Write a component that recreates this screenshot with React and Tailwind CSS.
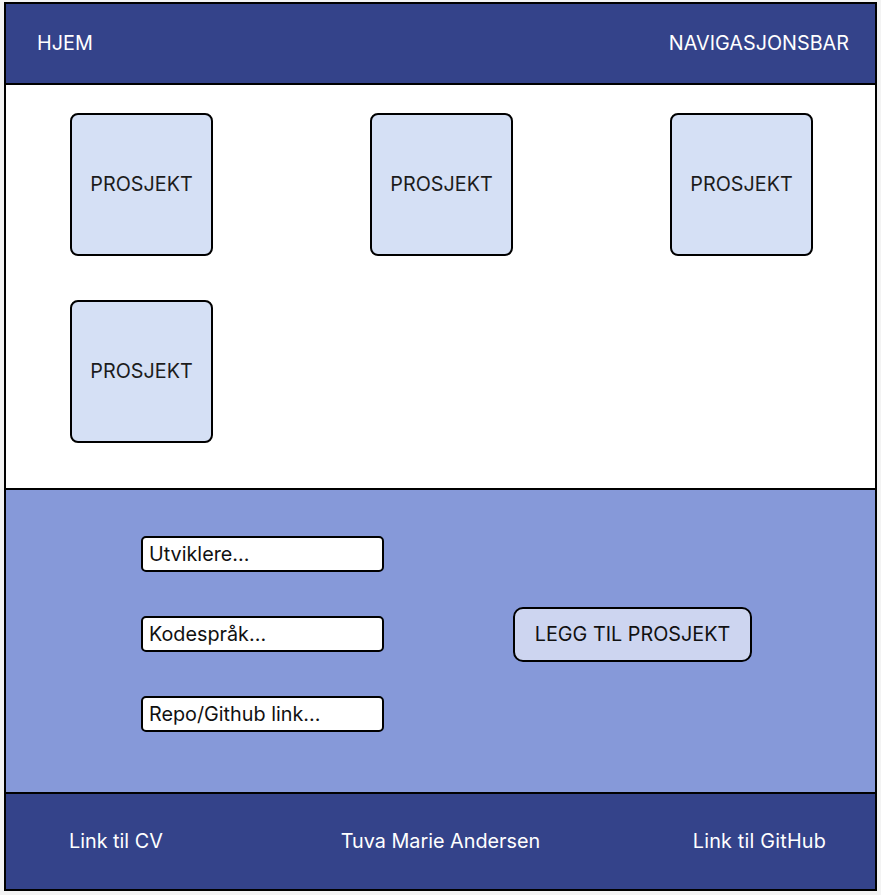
import React from 'react';

const font = { fontFamily: 'Inter, "Noto Sans", sans-serif' };

const ProjectCard = () => (
  <div className="w-[143px] h-[143px] rounded-lg border-2 border-black bg-[#d5e0f5] flex items-center justify-center text-[19.8px] text-[#1c1c1c]">
    PROSJEKT
  </div>
);

const Field = ({ placeholder }) => (
  <input
    type="text"
    placeholder={placeholder}
    className="w-[243px] h-[36px] rounded-[5px] border-2 border-black bg-white px-[6px] text-[19.8px] text-black placeholder:text-[#111] outline-none"
  />
);

export default function App() {
  return (
    <div className="min-h-[895px] bg-[#f3f3f3] pt-[2px] pl-[4px]" style={font}>
      <div className="w-[873px] border-2 border-black">
        <header className="h-[81px] border-b-2 border-black bg-[#34438a] flex items-center justify-between pl-[31px] pr-[26px] text-[19.8px] text-white">
          <span>HJEM</span>
          <span>NAVIGASJONSBAR</span>
        </header>

        <main className="h-[405px] border-b-2 border-black bg-white pt-[28px] pl-[64px]">
          <div className="grid grid-cols-[repeat(3,143px)] gap-x-[157px] gap-y-[44px]">
            <ProjectCard />
            <ProjectCard />
            <ProjectCard />
            <ProjectCard />
          </div>
        </main>

        <section className="h-[304px] border-b-2 border-black bg-[#8699d9] pt-[46px] pl-[135px] flex items-start">
          <div className="flex flex-col gap-[44px]">
            <Field placeholder="Utviklere..." />
            <Field placeholder="Kodespråk..." />
            <Field placeholder="Repo/Github link..." />
          </div>
          <button className="ml-[129px] mt-[71px] w-[239px] h-[55px] rounded-[10px] border-2 border-black bg-[#cdd5f0] text-[19.8px] text-[#111]">
            LEGG TIL PROSJEKT
          </button>
        </section>

        <footer className="h-[95px] bg-[#34438a] grid grid-cols-[1fr_auto_1fr] items-center text-[19.8px] text-white">
          <span className="justify-self-start pl-[63px]">Link til CV</span>
          <span>Tuva Marie Andersen</span>
          <span className="justify-self-end pr-[49px] tracking-[0.2px]">Link til GitHub</span>
        </footer>
      </div>
    </div>
  );
}
